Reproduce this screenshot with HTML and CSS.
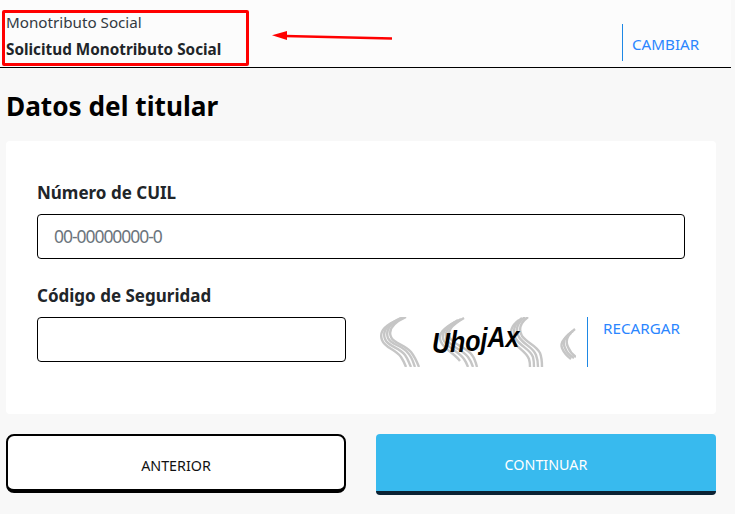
FILE: index.html
```html
<!DOCTYPE html>
<html lang="es">
<head>
<meta charset="utf-8">
<title>Datos del titular</title>
<link rel="stylesheet" href="styles.css">
</head>
<body>
<div class="page">
  <header class="top">
    <div class="top-titles">
      <div class="top-sub">Monotributo Social</div>
      <div class="top-main">Solicitud Monotributo Social</div>
    </div>
    <a class="change" href="#">CAMBIAR</a>
  </header>
  <h1 class="title">Datos del titular</h1>
  <section class="card">
    <label class="label label-first">Número de CUIL</label>
    <div class="input input-full"><span class="placeholder">00-00000000-0</span></div>
    <label class="label label-second">Código de Seguridad</label>
    <div class="captcha-row">
      <div class="input input-half"></div>
      <div class="captcha">
        <svg class="swirls" width="200" height="50" viewBox="0 0 200 50" aria-hidden="true">
          <g class="swirl-set">
            <path d="M30 0C17 6 12 13 15 20C18 27 28 27 35 35C39 40 41 45 43 50"/>
            <path d="M28 0C14 6 9 13 12 21C15 28 26 28 32 36C36 40 37 45 39 50"/>
            <path d="M25 1C11 7 6 14 9 22C12 30 23 30 29 38C32 42 33 46 35 50"/>
            <path d="M22 3C9 8 3 15 6 23C9 31 19 32 25 40C27 43 29 47 30 50"/>
            <path d="M88 1C76 8 70 14 74 21C78 28 90 30 96 38C99 42 100 46 101 50"/>
            <path d="M85 2C73 9 67 15 71 23C75 30 86 32 92 40C95 44 96 47 97 50"/>
            <path d="M82 3C70 10 64 16 68 24C72 31 82 34 88 42C90 45 91 47 92 50"/>
            <path d="M79 5C68 11 61 17 65 25C69 33 78 36 84 44"/>
            <path d="M152 0C144 6 142 12 146 19C151 26 160 28 164 36C166 41 166 46 166 50"/>
            <path d="M149 0C141 6 139 13 143 20C148 28 157 30 160 38C162 43 162 47 162 50"/>
            <path d="M146 1C138 7 136 14 140 22C145 30 154 32 157 40C158 44 158 47 158 50"/>
            <path d="M143 3C135 9 133 15 137 24C141 31 150 34 153 42C154 45 154 47 154 50"/>
            <path d="M199 12C191 18 189 24 192 30C194 35 197 38 200 40"/>
            <path d="M197 14C189 19 186 25 189 31C191 36 194 39 198 41"/>
            <path d="M195 16C188 21 184 26 186 31C188 36 191 39 195 42"/>
          </g>
        </svg>
        <span class="captcha-text"><span class="c1">U</span><span class="c2">h</span><span class="c3">o</span><span class="c4">j</span><span class="c5">A</span><span class="c6">x</span></span>
      </div>
      <div class="reload-box"><a class="reload" href="#">RECARGAR</a></div>
    </div>
  </section>
  <div class="actions">
    <button class="btn btn-back" type="button">ANTERIOR</button>
    <button class="btn btn-next" type="button">CONTINUAR</button>
  </div>

  <div class="mark-box"></div>
  <svg class="mark-arrow" width="125" height="20" viewBox="0 0 125 20" aria-hidden="true">
    <path class="arrow-line" d="M14 8L121 10.5"/>
    <path class="arrow-head" d="M1 7.3L16 3L16 12Z"/>
  </svg>
</div>
</body>
</html>
```
FILE: styles.css
```css
* { box-sizing: border-box; }
html, body { margin: 0; padding: 0; }
body {
  width: 735px;
  height: 514px;
  overflow: hidden;
  background: #f8f8f8;
  font-family: "Noto Sans", "Open Sans", sans-serif;
  color: #212529;
}
.page { position: relative; width: 735px; height: 514px; }
.top {
  width: 731px;
  height: 68px;
  background: #fcfcfc;
  border-bottom: 1px solid #000;
  display: flex;
  justify-content: space-between;
  align-items: flex-start;
  padding: 0 0 0 6px;
}
.top-titles { padding-top: 12px; }
.top-sub { font-size: 15.2px; line-height: 21px; color: #333a42; }
.top-main { font-size: 15.3px; line-height: 21px; margin-top: 6px; font-weight: 700; color: #212529; }
.change {
  margin-top: 24px;
  width: 109px;
  height: 37px;
  border-left: 1px solid #1e88e5;
  padding-left: 9px;
  font-size: 15.2px;
  line-height: 40px;
  color: #2b86ff;
  text-decoration: none;
}
.title {
  margin: 0;
  padding: 21px 0 0 6px;
  height: 73px;
  font-size: 26.2px;
  line-height: 34px;
  font-weight: 700;
  color: #000;
}
.card {
  margin-left: 6px;
  width: 710px;
  height: 273px;
  background: #fff;
  border-radius: 4px;
  padding: 41px 31px 0;
}
.label { display: block; font-size: 17px; line-height: 22px; font-weight: 700; color: #212529; }
.label-second { margin-top: 26px; }
.input {
  height: 45px;
  margin-top: 10px;
  background: #fff;
  border: 1px solid #000;
  border-radius: 4px;
}
.input-full { width: 648px; padding-left: 16px; line-height: 43px; }
.placeholder { font-size: 17.5px; letter-spacing: -1.05px; color: #6c757d; }
.captcha-row { display: flex; align-items: flex-start; }
.input-half { width: 309px; flex: none; }
.captcha {
  position: relative;
  flex: none;
  width: 200px;
  height: 50px;
  margin-left: 30px;
  margin-top: 10px;
  overflow: hidden;
}
.swirls { display: block; }
.swirl-set path { fill: none; stroke: #c6c6c6; stroke-width: 2.4; }
.captcha-text {
  position: absolute;
  left: 56px;
  top: 3px;
  display: flex;
  font-family: "Liberation Sans", sans-serif;
  font-style: italic;
  font-weight: 700;
  font-size: 29px;
  line-height: 36px;
  color: #000;
  transform: scaleX(.86);
  transform-origin: 0 50%;
  white-space: nowrap;
}
.captcha-text span { display: inline-block; }
.c1 { transform: translateY(5px); }
.c2 { transform: translateY(4px); }
.c3 { transform: translateY(3px); }
.c4 { transform: translateY(1px); }
.c5 { transform: translateY(-1px); }
.c6 { transform: translateY(-1px); }
.reload-box {
  flex: none;
  width: 60px;
  height: 50px;
  margin-top: 10px;
  margin-left: 11px;
  border-left: 1px solid #1e88e5;
  padding-left: 15px;
  white-space: nowrap;
}
.reload { font-size: 15.2px; line-height: 22px; color: #2b86ff; text-decoration: none; }
.actions { display: flex; gap: 30px; margin: 20px 0 0 6px; width: 710px; align-items: flex-start; }
.btn {
  width: 340px;
  font-family: "Noto Sans", "Open Sans", sans-serif;
  font-size: 14.3px;
  padding: 0;
}
.btn-back {
  height: 59px;
  background: #fff;
  color: #111;
  border: 2px solid #000;
  border-bottom-width: 4px;
  border-radius: 8px;
  padding-top: 6px;
}
.btn-next {
  height: 61px;
  background: #38baee;
  color: #fff;
  border: 0;
  border-bottom: 4px solid #0b2233;
  border-radius: 4px;
  padding-top: 4px;
}
.mark-box {
  position: absolute;
  left: 2px;
  top: 10px;
  width: 247px;
  height: 56px;
  border: 3px solid #f00;
  border-radius: 2px;
}
.mark-arrow { position: absolute; left: 271px; top: 28px; }
.arrow-line { fill: none; stroke: #f00; stroke-width: 2.4; }
.arrow-head { fill: #f00; }
```
